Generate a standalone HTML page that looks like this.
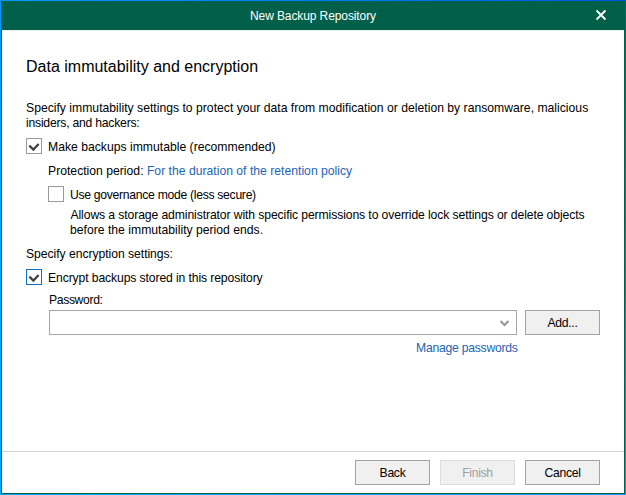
<!DOCTYPE html>
<html><head><meta charset="utf-8">
<style>
html,body{margin:0;padding:0;width:626px;height:495px;overflow:hidden;background:#fff;}
body{position:relative;font-family:"Liberation Sans",sans-serif;font-size:12.2px;color:#000;}
.a{position:absolute;white-space:nowrap;line-height:15px;}
#inner{position:absolute;left:1px;top:1px;width:622px;height:492px;border:1px solid #02604a;border-top:none;}
#titlebar{position:absolute;left:1px;top:1px;width:624px;height:29px;background:#02604a;}
#title{color:#fff;font-size:12px;letter-spacing:-0.1px}
.link{color:#1d64b6;}
.cb{position:absolute;width:14px;height:14px;border:1px solid #999999;background:#fff;}
.cb svg{position:absolute;left:-1px;top:-1px;}
.btn{position:absolute;box-sizing:border-box;height:25px;width:75px;border:1px solid #a3a3a3;background:#f0f0f0;text-align:center;line-height:25px;letter-spacing:-0.3px;}
</style></head><body>
<div style="position:absolute;left:0;top:0;width:626px;height:1px;background:linear-gradient(90deg,#0098ff,#0088ff 25%,#0070f0 70%,#0052e0)"></div>
<div style="position:absolute;left:0;top:0;width:1px;height:495px;background:linear-gradient(180deg,#0098ff,#00a8ff 40%,#00aaff)"></div>
<div style="position:absolute;left:625px;top:0;width:1px;height:495px;background:linear-gradient(180deg,#0052e0,#0070ff 45%,#1a92ff)"></div>
<div style="position:absolute;left:0;top:494px;width:626px;height:1px;background:linear-gradient(90deg,#00aaff,#1aa0ff 60%,#2298ff)"></div>
<div id="inner"></div>
<div id="titlebar"></div>
<div class="a" id="title" style="left:250px;top:9px;">New Backup Repository</div>
<svg style="position:absolute;left:595px;top:9px" width="12" height="12" viewBox="0 0 12 12"><path d="M1.5 1.5 L10.5 10.5 M10.5 1.5 L1.5 10.5" stroke="#fff" stroke-width="1.8"/></svg>
<div style="position:absolute;left:2px;top:30px;width:622px;height:1px;background:#f3eeee"></div>

<div class="a" style="left:26px;top:57px;font-size:16px;line-height:20px;">Data immutability and encryption</div>
<div class="a" style="left:26px;top:101px;">Specify immutability settings to protect your data from modification or deletion by ransomware, malicious</div>
<div class="a" style="left:26px;top:116px;letter-spacing:-0.23px;">insiders, and hackers:</div>

<div class="cb" style="left:26px;top:138px;"><svg width="16" height="16"><path d="M3.3 7.6 L7.4 11.6 L12.6 6" fill="none" stroke="#404040" stroke-width="2.2"/></svg></div>
<div class="a" style="left:48px;top:140px;">Make backups immutable (recommended)</div>
<div class="a" style="left:48px;top:164px;">Protection period: <span class="link">For the duration of the retention policy</span></div>

<div class="cb" style="left:48px;top:186px;"></div>
<div class="a" style="left:70px;top:188px;letter-spacing:-0.3px;">Use governance mode (less secure)</div>
<div class="a" style="left:70.5px;top:208px;letter-spacing:-0.11px;">Allows a storage administrator with specific permissions to override lock settings or delete objects</div>
<div class="a" style="left:70px;top:223px;">before the immutability period ends.</div>

<div class="a" style="left:26px;top:247px;letter-spacing:-0.05px;">Specify encryption settings:</div>
<div class="cb" style="left:26px;top:269px;border-color:#0f6fc6"><svg width="16" height="16"><path d="M3.3 7.6 L7.4 11.6 L12.6 6" fill="none" stroke="#404040" stroke-width="2.2"/></svg></div>
<div class="a" style="left:48px;top:271px;letter-spacing:-0.12px;">Encrypt backups stored in this repository</div>
<div class="a" style="left:49px;top:293px;letter-spacing:-0.37px;">Password:</div>

<div style="position:absolute;left:49px;top:310px;width:466px;height:23px;border:1px solid #a6a6a6;background:#fff"></div>
<svg style="position:absolute;left:498px;top:318px" width="12" height="10"><path d="M2.5 3 L6.5 7 L10.5 3" fill="none" stroke="#999" stroke-width="2.2"/></svg>
<div class="btn" style="left:525px;top:310px;">Add...</div>
<div class="a link" style="left:416px;top:340.5px;letter-spacing:-0.25px;">Manage passwords</div>

<div style="position:absolute;left:2px;top:451px;width:622px;height:1px;background:#d3d3d3"></div>
<div class="btn" style="left:355px;top:460px;">Back</div>
<div class="btn" style="left:440px;top:460px;color:#a0a0a0;border-color:#dcdcdc;">Finish</div>
<div class="btn" style="left:525px;top:460px;">Cancel</div>
</body></html>
